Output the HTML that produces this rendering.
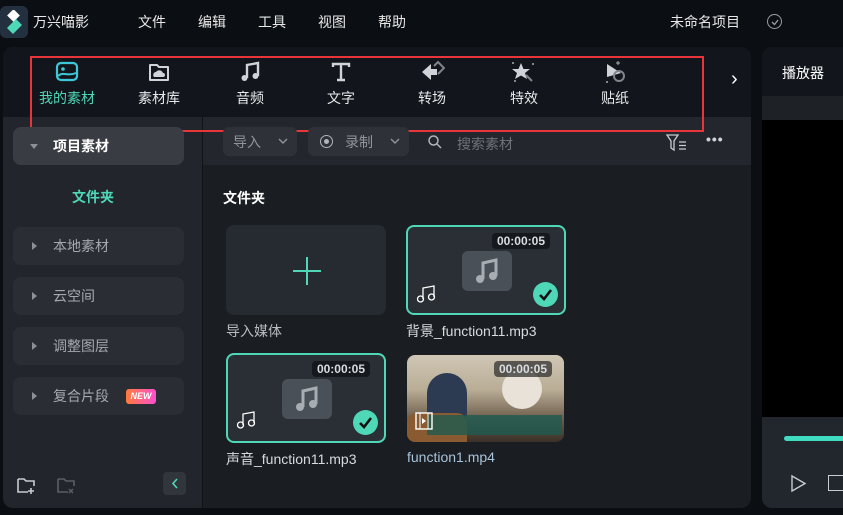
<!DOCTYPE html>
<html><head><meta charset="utf-8"><style>
*{margin:0;padding:0;box-sizing:border-box}
body{width:843px;height:515px;background:#0b0e12;font-family:"Liberation Sans","Noto Sans CJK SC",sans-serif;color:#e6e8ea;position:relative;overflow:hidden;font-size:14px}
.a{position:absolute}
.menu{top:12px;font-size:14px;color:#e8e8e8}
.tool{position:absolute;top:60px;width:80px;text-align:center;font-size:14px;color:#e6e8ea}
.tool svg{display:block;margin:0 auto 4px}
.side{position:absolute;left:13px;width:171px;height:38px;background:#2a2e34;border-radius:8px;font-size:14px;color:#a4a9ae;line-height:38px;padding-left:40px}
.side:before{content:"";position:absolute;left:19px;top:15px;border-left:5px solid #8d9196;border-top:4px solid transparent;border-bottom:4px solid transparent}
.side.open:before{left:17px;top:17px;border-top:5px solid #8d9196;border-left:4px solid transparent;border-right:4px solid transparent;border-bottom:0}
.card{position:absolute;width:160px;height:90px;border-radius:8px;background:#2a2f35}
.sel{border:2px solid #4fd8b8}
.dur{position:absolute;right:14px;top:6px;background:#15181c;border-radius:4px;font-size:12px;font-weight:bold;color:#d8dde2;padding:1px 5px}
.lbl{position:absolute;font-size:14px;color:#d8dbde}
.chk{position:absolute;right:6px;bottom:6px;width:25px;height:25px;border-radius:50%;background:#4fd8b8}
</style></head><body>
<div class="a" style="left:0;top:6px;width:28px;height:32px;background:#233040;border-radius:6px"></div>
<svg class="a" style="left:4px;top:10px" width="20" height="24"><rect x="5" y="1" width="9" height="9" fill="#fff" transform="rotate(45 9.5 5.5)"/><path d="M3 18 L12 9 L18 15 L9 24Z" fill="#4fd8b8"/></svg>
<div class="a menu" style="left:33px">万兴喵影</div>
<div class="a menu" style="left:138px">文件</div>
<div class="a menu" style="left:198px">编辑</div>
<div class="a menu" style="left:258px">工具</div>
<div class="a menu" style="left:318px">视图</div>
<div class="a menu" style="left:378px">帮助</div>
<div class="a menu" style="left:670px">未命名项目</div>
<div class="a" style="left:767px;top:14px;width:15px;height:15px;border:1.5px solid #9a9ea3;border-radius:50%"></div>
<svg class="a" style="left:770px;top:17px" width="10" height="10"><path d="M2 5 L4.5 7.5 L8 3" stroke="#9a9ea3" stroke-width="1.3" fill="none"/></svg>

<div class="a" style="left:3px;top:47px;width:748px;height:461px;border-radius:10px;background:#1a1d21;overflow:hidden">
  <div class="a" style="left:0;top:0;width:748px;height:70px;background:#12161c"></div>
  <div class="a" style="left:0;top:70px;width:199px;height:391px;background:#22262c"></div>
  <div class="a" style="left:199px;top:70px;width:1px;height:391px;background:#101316"></div>
  <div class="a" style="left:200px;top:70px;width:548px;height:48px;background:#23272d"></div>
</div>
<div class="tool" style="left:27px"><svg width="24" height="24"><rect x="2" y="3" width="20" height="17" rx="4" fill="none" stroke="#3cc8d8" stroke-width="2.2"/><circle cx="8" cy="9" r="1.8" fill="#3cc8d8"/><path d="M3 16 C8 11 12 17 21 13" stroke="#3cc8d8" stroke-width="2" fill="none"/></svg><span style="color:#4fd8b8">我的素材</span></div>
<div class="tool" style="left:119px"><svg width="24" height="24"><path d="M3 5 h7 l2 2 h9 v13 h-18z" fill="none" stroke="#d0d4d8" stroke-width="2" stroke-linejoin="round"/><path d="M7 17 a3 3 0 0 1 2-5 a4 4 0 0 1 7 1 a2 2 0 0 1 0 4z" fill="#d0d4d8"/></svg>素材库</div>
<div class="tool" style="left:210px"><svg width="24" height="24"><path d="M9 18 V5 L20 3 V16" stroke="#d0d4d8" stroke-width="2.4" fill="none"/><circle cx="6.5" cy="18" r="3" fill="#d0d4d8"/><circle cx="17.5" cy="16" r="3" fill="#d0d4d8"/></svg>音频</div>
<div class="tool" style="left:301px"><svg width="24" height="24"><path d="M4 7 V4 H20 V7 M12 4 V20 M8 20 H16" stroke="#d0d4d8" stroke-width="2.4" fill="none"/></svg>文字</div>
<div class="tool" style="left:392px"><svg width="26" height="24"><path d="M12 4 L3 12 L12 20 V15 H18 V9 H12z" fill="#d0d4d8"/><path d="M15 6 L19 2 L25 8 L19 14" stroke="#80858b" stroke-width="2" fill="none"/></svg>转场</div>
<div class="tool" style="left:484px"><svg width="26" height="24"><path d="M10 3 L12.5 9 L19 9 L14 13 L16 19 L10 15.5 L4 19 L6 13 L1 9 L7.5 9z" fill="#d0d4d8"/><path d="M15 15 L21 21" stroke="#80858b" stroke-width="2"/><circle cx="2" cy="3" r="1" fill="#aaa"/><circle cx="22" cy="4" r="1" fill="#aaa"/><circle cx="4" cy="21" r="1" fill="#aaa"/></svg>特效</div>
<div class="tool" style="left:575px"><svg width="26" height="24"><path d="M5 4 L19 13 L5 17z" fill="#d0d4d8"/><circle cx="17" cy="16" r="5" fill="none" stroke="#80858b" stroke-width="2"/><path d="M16 1 v4 M14 3 h4" stroke="#aaa" stroke-width="1"/><circle cx="5" cy="22" r="1" fill="#aaa"/></svg>贴纸</div>
<div class="a" style="left:731px;top:68px;font-size:20px;color:#fff">&#x203A;</div>
<div class="a" style="left:30px;top:56px;width:674px;height:76px;border:2.5px solid #e8353a"></div>

<div class="side open" style="top:127px;background:#393d43;color:#fff;font-weight:bold">项目素材</div>
<div class="a" style="left:72px;top:187px;color:#4fd8b8;font-weight:bold">文件夹</div>
<div class="side" style="top:227px">本地素材</div>
<div class="side" style="top:277px">云空间</div>
<div class="side" style="top:327px">调整图层</div>
<div class="side" style="top:377px">复合片段<span style="position:absolute;left:113px;top:12px;height:15px;line-height:15px;width:30px;border-radius:3px;background:linear-gradient(90deg,#ff7a3c,#ff4fd0);font-size:9px;font-style:italic;font-weight:bold;color:#fff;text-align:center">NEW</span></div>
<svg class="a" style="left:16px;top:475px" width="20" height="20"><path d="M2 4 h6 l2 2 h8 v5 M2 4 v13 h10" stroke="#c8ccd0" stroke-width="1.6" fill="none"/><path d="M15 13 v6 M12 16 h6" stroke="#c8ccd0" stroke-width="1.6"/></svg>
<svg class="a" style="left:56px;top:475px" width="20" height="20"><path d="M2 4 h6 l2 2 h8 v5 M2 4 v13 h10" stroke="#5a5f65" stroke-width="1.6" fill="none"/><path d="M13 14 l4 4 M17 14 l-4 4" stroke="#5a5f65" stroke-width="1.5"/></svg>
<div class="a" style="left:163px;top:472px;width:23px;height:23px;border-radius:4px;background:#31363c"></div>
<svg class="a" style="left:169px;top:477px" width="12" height="13"><path d="M8 2 L4 6.5 L8 11" stroke="#4fd8b8" stroke-width="1.6" fill="none"/></svg>

<div class="a" style="left:223px;top:127px;width:74px;height:29px;border-radius:6px;background:#2e3238;color:#8f959a;padding:5px 10px">导入</div>
<svg class="a" style="left:278px;top:137px" width="10" height="8"><path d="M1 2 L5 6 L9 2" stroke="#8f959a" stroke-width="1.4" fill="none"/></svg>
<div class="a" style="left:308px;top:127px;width:101px;height:29px;border-radius:6px;background:#2e3238;color:#8f959a;padding:5px 0 0 37px">录制</div>
<svg class="a" style="left:390px;top:137px" width="10" height="8"><path d="M1 2 L5 6 L9 2" stroke="#8f959a" stroke-width="1.4" fill="none"/></svg>
<div class="a" style="left:320px;top:135px;width:13px;height:13px;border:1.5px solid #b0b5ba;border-radius:50%"></div>
<div class="a" style="left:324px;top:139px;width:5px;height:5px;background:#b0b5ba;border-radius:50%"></div>
<svg class="a" style="left:427px;top:134px" width="16" height="16"><circle cx="6.5" cy="6.5" r="4.5" stroke="#b0b5ba" stroke-width="1.5" fill="none"/><path d="M10 10 L14 14" stroke="#b0b5ba" stroke-width="1.5"/></svg>
<div class="a" style="left:457px;top:134px;color:#6e7378">搜索素材</div>
<svg class="a" style="left:665px;top:133px" width="24" height="20"><path d="M2 2 H13 L9 8 V17 L6 15 V8z" stroke="#c8ccd0" stroke-width="1.3" fill="none"/><path d="M14 9 h7 M14 12.5 h7 M14 16 h7" stroke="#c8ccd0" stroke-width="1.3"/></svg>
<div class="a" style="left:706px;top:131px;color:#d0d4d8;font-size:14px;letter-spacing:1px;font-weight:bold">•••</div>

<div class="a" style="left:223px;top:188px;font-weight:bold;color:#fff">文件夹</div>
<div class="card" style="left:226px;top:225px;background:#262b31"></div>
<svg class="a" style="left:292px;top:256px" width="30" height="30"><path d="M15 1 V29 M1 15 H29" stroke="#4fd8b8" stroke-width="2"/></svg>
<div class="lbl" style="left:226px;top:321px;color:#b8bcc0">导入媒体</div>

<div class="card sel" style="left:406px;top:225px"><div class="dur">00:00:05</div>
<div class="a" style="left:54px;top:24px;width:50px;height:40px;border-radius:6px;background:#4a5058"></div>
<svg class="a" style="left:66px;top:30px" width="26" height="28"><path d="M9 22 V6 L22 3 V19" stroke="#a8adb3" stroke-width="3" fill="none"/><circle cx="6" cy="22" r="4" fill="#a8adb3"/><circle cx="19" cy="19" r="4" fill="#a8adb3"/></svg>
<svg class="a" style="left:8px;top:57px" width="22" height="20"><path d="M7 15 V4 L18 2 V13" stroke="#fff" stroke-width="1.3" fill="none"/><circle cx="4.5" cy="15" r="3" stroke="#fff" stroke-width="1.3" fill="none"/><circle cx="15.5" cy="13" r="3" stroke="#fff" stroke-width="1.3" fill="none"/></svg>
<div class="chk"><svg width="25" height="25"><path d="M7 13 L11 17 L18 8" stroke="#111" stroke-width="2.6" fill="none"/></svg></div></div>
<div class="lbl" style="left:406px;top:321px">背景_function11.mp3</div>

<div class="card sel" style="left:226px;top:353px"><div class="dur">00:00:05</div>
<div class="a" style="left:54px;top:24px;width:50px;height:40px;border-radius:6px;background:#4a5058"></div>
<svg class="a" style="left:66px;top:30px" width="26" height="28"><path d="M9 22 V6 L22 3 V19" stroke="#a8adb3" stroke-width="3" fill="none"/><circle cx="6" cy="22" r="4" fill="#a8adb3"/><circle cx="19" cy="19" r="4" fill="#a8adb3"/></svg>
<svg class="a" style="left:8px;top:55px" width="22" height="20"><path d="M7 15 V4 L18 2 V13" stroke="#fff" stroke-width="1.3" fill="none"/><circle cx="4.5" cy="15" r="3" stroke="#fff" stroke-width="1.3" fill="none"/><circle cx="15.5" cy="13" r="3" stroke="#fff" stroke-width="1.3" fill="none"/></svg>
<div class="chk"><svg width="25" height="25"><path d="M7 13 L11 17 L18 8" stroke="#111" stroke-width="2.6" fill="none"/></svg></div></div>
<div class="lbl" style="left:226px;top:449px">声音_function11.mp3</div>

<div class="card" style="left:407px;top:355px;width:157px;height:87px;overflow:hidden;background:linear-gradient(180deg,#cfc6b4 0%,#b9ad96 40%,#6a5a48 75%,#3a3028 100%)">
<div class="a" style="left:20px;top:18px;width:40px;height:45px;border-radius:20px 20px 4px 4px;background:#2c3a52"></div>
<div class="a" style="left:95px;top:14px;width:40px;height:40px;border-radius:50%;background:#e8e2d8"></div>
<div class="a" style="left:0;top:58px;width:60px;height:29px;background:#8a5a30;border-radius:10px 10px 0 0"></div>
<div class="a" style="left:20px;top:60px;width:135px;height:20px;background:rgba(30,90,80,.8)"></div>
<div class="dur" style="background:rgba(40,40,40,.7);right:12px">00:00:05</div>
<svg class="a" style="left:8px;top:57px" width="18" height="18"><rect x="1" y="1" width="16" height="16" fill="none" stroke="#fff" stroke-width="1.4"/><path d="M5 1 V17 M13 1 V17" stroke="#fff"/><path d="M7 6 L11 9 L7 12z" fill="#fff"/></svg></div>
<div class="lbl" style="left:407px;top:449px;color:#a8c4d8">function1.mp4</div>

<div class="a" style="left:762px;top:47px;width:90px;height:461px;border-radius:10px 0 0 10px;background:#1e2126;overflow:hidden">
<div class="a" style="left:0;top:0;width:90px;height:49px;background:#12161c"></div>
<div class="a" style="left:20px;top:16px;color:#fff;font-size:14px">播放器</div>
<div class="a" style="left:0;top:73px;width:90px;height:297px;background:#000"></div>
<div class="a" style="left:0;top:370px;width:90px;height:91px;background:#22272d"></div>
<div class="a" style="left:22px;top:389px;width:70px;height:5px;border-radius:3px;background:#3fdcc0"></div>
<svg class="a" style="left:27px;top:427px" width="20" height="20"><path d="M3 2 L16 9.5 L3 17z" stroke="#c8ccd0" stroke-width="1.4" fill="none"/></svg>
<div class="a" style="left:66px;top:428px;width:16px;height:16px;border:1.4px solid #c8ccd0"></div>
</div>
</body></html>
